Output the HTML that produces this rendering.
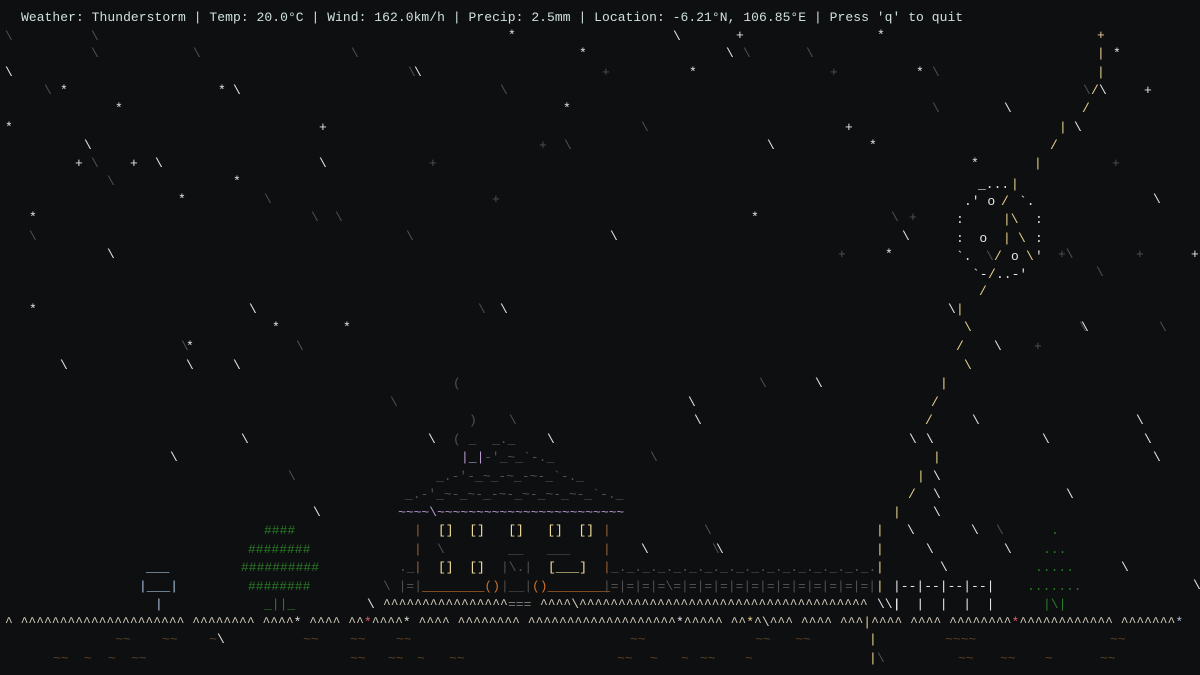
<!DOCTYPE html>
<html><head><meta charset="utf-8"><style>
html,body{margin:0;padding:0;background:#0e0f10;width:1200px;height:675px;overflow:hidden}
body{position:relative;font-family:"Liberation Mono",monospace;font-size:13px;line-height:18px}
i{font-style:normal;position:absolute;white-space:pre}
.w{color:#e4e4e4}.g{color:#505050}.d{color:#3a3a3a}.y{color:#e8d08e}.l{color:#b89ad2}.b{color:#9a6038}
.o{color:#c8702a}.c{color:#f2dc9a}.gn{color:#2c7a2a}.s{color:#a8c4dc}.h{color:#8a8a8a}.r{color:#e06060}
.t{color:#cfe0dc}.gr{color:#d8cfbd}.m{color:#5e4226}.hg{color:#7a7a7a}
</style></head><body>
<i class="t" style="left:21px;top:9px;letter-spacing:0.05px">Weather: Thunderstorm | Temp: 20.0°C | Wind: 162.0km/h | Precip: 2.5mm | Location: -6.21°N, 106.85°E | Press 'q' to quit</i>

<!-- rain & stars -->
<i class="g" style="left:5px;top:28px">\</i><i class="g" style="left:91px;top:28px">\</i><i class="w" style="left:508px;top:27px">*</i><i class="w" style="left:673px;top:28px">\</i><i class="w" style="left:736px;top:27px">+</i><i class="g" style="left:743px;top:45px">\</i><i class="w" style="left:877px;top:27px">*</i>
<i class="g" style="left:91px;top:45px">\</i><i class="g" style="left:193px;top:45px">\</i><i class="g" style="left:351px;top:45px">\</i><i class="w" style="left:579px;top:45px">*</i><i class="w" style="left:726px;top:45px">\</i><i class="g" style="left:806px;top:45px">\</i><i class="w" style="left:1113px;top:45px">*</i>
<i class="w" style="left:5px;top:64px">\</i><i class="g" style="left:408px;top:64px">\</i><i class="w" style="left:414px;top:64px">\</i><i class="g" style="left:602px;top:64px">+</i><i class="w" style="left:689px;top:64px">*</i><i class="g" style="left:830px;top:64px">+</i><i class="w" style="left:916px;top:64px">*</i><i class="g" style="left:932px;top:64px">\</i>
<i class="g" style="left:44px;top:82px">\</i><i class="w" style="left:60px;top:82px">*</i><i class="w" style="left:218px;top:82px">*</i><i class="w" style="left:233px;top:82px">\</i><i class="g" style="left:500px;top:82px">\</i><i class="w" style="left:1144px;top:82px">+</i>
<i class="w" style="left:115px;top:100px">*</i><i class="w" style="left:563px;top:100px">*</i><i class="g" style="left:932px;top:100px">\</i><i class="w" style="left:1004px;top:100px">\</i>
<i class="w" style="left:5px;top:119px">*</i><i class="w" style="left:319px;top:119px">+</i><i class="g" style="left:641px;top:119px">\</i><i class="w" style="left:845px;top:119px">+</i><i class="w" style="left:1074px;top:119px">\</i>
<i class="w" style="left:84px;top:137px">\</i><i class="g" style="left:539px;top:137px">+</i><i class="g" style="left:564px;top:137px">\</i><i class="w" style="left:767px;top:137px">\</i><i class="w" style="left:869px;top:137px">*</i>
<i class="w" style="left:75px;top:155px">+</i><i class="g" style="left:91px;top:155px">\</i><i class="w" style="left:130px;top:155px">+</i><i class="w" style="left:155px;top:155px">\</i><i class="w" style="left:319px;top:155px">\</i><i class="g" style="left:429px;top:155px">+</i><i class="w" style="left:971px;top:155px">*</i><i class="g" style="left:1112px;top:155px">+</i>
<i class="g" style="left:107px;top:173px">\</i><i class="w" style="left:233px;top:173px">*</i>
<i class="w" style="left:178px;top:191px">*</i><i class="g" style="left:264px;top:191px">\</i><i class="g" style="left:492px;top:191px">+</i><i class="w" style="left:1153px;top:191px">\</i>
<i class="w" style="left:29px;top:209px">*</i><i class="g" style="left:311px;top:209px">\</i><i class="g" style="left:335px;top:209px">\</i><i class="w" style="left:751px;top:209px">*</i><i class="g" style="left:891px;top:209px">\</i><i class="g" style="left:909px;top:209px">+</i>
<i class="g" style="left:29px;top:228px">\</i><i class="g" style="left:406px;top:228px">\</i><i class="w" style="left:610px;top:228px">\</i><i class="w" style="left:902px;top:228px">\</i>
<i class="w" style="left:107px;top:246px">\</i><i class="g" style="left:838px;top:246px">+</i><i class="w" style="left:885px;top:246px">*</i><i class="g" style="left:1058px;top:246px">+\</i><i class="g" style="left:1136px;top:246px">+</i><i class="w" style="left:1191px;top:246px">+</i>
<i class="g" style="left:1096px;top:264px">\</i>
<i class="w" style="left:29px;top:301px">*</i><i class="w" style="left:249px;top:301px">\</i><i class="g" style="left:478px;top:301px">\</i><i class="w" style="left:500px;top:301px">\</i>
<i class="w" style="left:272px;top:319px">*</i><i class="w" style="left:343px;top:319px">*</i><i class="g" style="left:1079px;top:319px">\</i><i class="w" style="left:1081px;top:319px">\</i><i class="g" style="left:1159px;top:319px">\</i>
<i class="g" style="left:181px;top:338px">\</i><i class="w" style="left:186px;top:338px">*</i><i class="g" style="left:296px;top:338px">\</i><i class="w" style="left:994px;top:338px">\</i><i class="g" style="left:1034px;top:338px">+</i>
<i class="w" style="left:60px;top:357px">\</i><i class="w" style="left:186px;top:357px">\</i><i class="w" style="left:233px;top:357px">\</i>
<i class="g" style="left:453px;top:375px">(</i><i class="g" style="left:759px;top:375px">\</i><i class="w" style="left:815px;top:375px">\</i>
<i class="g" style="left:390px;top:394px">\</i><i class="w" style="left:688px;top:394px">\</i>
<i class="g" style="left:469px;top:412px">)</i><i class="g" style="left:509px;top:412px">\</i><i class="w" style="left:694px;top:412px">\</i><i class="w" style="left:972px;top:412px">\</i><i class="w" style="left:1136px;top:412px">\</i>
<i class="w" style="left:241px;top:431px">\</i><i class="w" style="left:428px;top:431px">\</i><i class="g" style="left:453px;top:431px">( _  _._</i><i class="w" style="left:547px;top:431px">\</i><i class="w" style="left:909px;top:431px">\</i><i class="w" style="left:1042px;top:431px">\</i><i class="w" style="left:1144px;top:431px">\</i>
<i class="w" style="left:170px;top:449px">\</i><i class="g" style="left:650px;top:449px">\</i><i class="w" style="left:1153px;top:449px">\</i>
<i class="g" style="left:288px;top:468px">\</i>
<i class="w" style="left:1066px;top:486px">\</i>
<i class="w" style="left:313px;top:504px">\</i>
<i class="g" style="left:704px;top:522px">\</i><i class="w" style="left:971px;top:522px">\</i><i class="g" style="left:996px;top:522px">\</i>
<i class="w" style="left:641px;top:541px">\</i><i class="g" style="left:712px;top:541px">\</i><i class="w" style="left:716px;top:541px">\</i><i class="w" style="left:1004px;top:541px">\</i>
<i class="w" style="left:1121px;top:559px">\</i><i class="w" style="left:1193px;top:577px">\</i>

<!-- lightning -->
<i class="y" style="left:1097px;top:27px">+</i><i class="y" style="left:1097px;top:45px">|</i><i class="y" style="left:1097px;top:64px">|</i>
<i class="g" style="left:1083px;top:82px">\</i><i class="y" style="left:1091px;top:82px">/</i><i class="w" style="left:1099px;top:82px">\</i>
<i class="y" style="left:1082px;top:100px">/</i><i class="y" style="left:1059px;top:119px">|</i><i class="y" style="left:1050px;top:137px">/</i><i class="y" style="left:1034px;top:155px">|</i>
<!-- moon -->
<i class="w" style="left:978px;top:176px">_...</i><i class="y" style="left:1011px;top:176px">|</i>
<i class="w" style="left:964px;top:193px">.' o</i><i class="y" style="left:1001px;top:193px">/</i><i class="w" style="left:1019px;top:193px">`.</i>
<i class="w" style="left:956px;top:211px">:</i><i class="y" style="left:1003px;top:211px">|\</i><i class="w" style="left:1035px;top:211px">:</i>
<i class="w" style="left:956px;top:230px">:  o</i><i class="y" style="left:1003px;top:230px">|</i><i class="y" style="left:1018px;top:230px">\</i><i class="w" style="left:1035px;top:230px">:</i>
<i class="w" style="left:956px;top:248px">`.</i><i class="g" style="left:986px;top:248px">\</i><i class="y" style="left:994px;top:248px">/</i><i class="w" style="left:1011px;top:248px">o</i><i class="y" style="left:1026px;top:248px">\</i><i class="w" style="left:1035px;top:248px">'</i>
<i class="w" style="left:972px;top:266px">`-</i><i class="y" style="left:988px;top:266px">/</i><i class="w" style="left:996px;top:266px">..-'</i>
<i class="y" style="left:979px;top:283px">/</i>
<i class="w" style="left:948px;top:301px">\</i><i class="y" style="left:956px;top:301px">|</i>
<i class="y" style="left:964px;top:319px">\</i><i class="y" style="left:956px;top:338px">/</i><i class="y" style="left:964px;top:357px">\</i>
<i class="y" style="left:940px;top:375px">|</i><i class="y" style="left:931px;top:394px">/</i><i class="y" style="left:925px;top:412px">/</i><i class="w" style="left:926px;top:431px">\</i>
<i class="y" style="left:933px;top:449px">|</i><i class="y" style="left:917px;top:468px">|</i><i class="w" style="left:933px;top:468px">\</i>
<i class="y" style="left:908px;top:486px">/</i><i class="w" style="left:933px;top:486px">\</i>
<i class="y" style="left:893px;top:504px">|</i><i class="w" style="left:933px;top:504px">\</i>
<i class="y" style="left:876px;top:522px">|</i><i class="w" style="left:907px;top:522px">\</i>
<i class="y" style="left:876px;top:541px">|</i><i class="w" style="left:926px;top:541px">\</i>
<i class="y" style="left:876px;top:559px">|</i><i class="w" style="left:940px;top:559px">\</i>
<i class="y" style="left:876px;top:578px">|</i><i class="y" style="left:869px;top:631px">|</i><i class="y" style="left:869px;top:650px">|</i><i class="g" style="left:877px;top:650px">\</i>

<!-- house -->
<i class="l" style="left:461px;top:449px">|_|</i><i class="g" style="left:484px;top:449px">-'_~_`-._</i>
<i class="g" style="left:436px;top:468px">_.-'-_~_-~_-~-_`-._</i>
<i class="g" style="left:405px;top:486px">_.-'_~-_~-_-~-_~-_~-_~-_`-._</i>
<i class="l" style="left:398px;top:504px">~~~~\~~~~~~~~~~~~~~~~~~~~~~~~</i>
<i class="b" style="left:414px;top:522px">|</i><i class="c" style="left:438px;top:522px">[]  []   []   []  []</i><i class="b" style="left:603px;top:522px">|</i>
<i class="b" style="left:414px;top:541px">|</i><i class="g" style="left:437px;top:541px">\</i><i class="g" style="left:508px;top:541px">__   ___</i><i class="b" style="left:603px;top:541px">|</i>
<i class="g" style="left:399px;top:559px">._</i><i class="b" style="left:414px;top:559px">|</i><i class="c" style="left:438px;top:559px">[]  []</i><i class="g" style="left:501px;top:559px">|\.|</i><i class="c" style="left:548px;top:559px">[___]</i><i class="b" style="left:603px;top:559px">|</i><i class="g" style="left:611px;top:559px">_._._._._._._._._._._._._._._._._.</i>
<i class="g" style="left:383px;top:578px">\ |=|</i><i class="o" style="left:422px;top:578px">________()</i><i class="g" style="left:501px;top:578px">|__|</i><i class="o" style="left:532px;top:578px">()________</i><i class="g" style="left:603px;top:578px">|=|=|=|=\=|=|=|=|=|=|=|=|=|=|=|=|=|</i>
<i class="w" style="left:367px;top:596px">\ </i><i class="gr" style="left:383px;top:596px">^^^^^^^^^^^^^^^^</i><i class="hg" style="left:508px;top:596px">===</i><i class="gr" style="left:540px;top:596px">^^^^\^^^^^^^^^^^^^^^^^^^^^^^^^^^^^^^^^^^^^</i><i class="w" style="left:877px;top:596px">\\|</i>
<i class="w" style="left:893px;top:578px">|--|--|--|--|</i><i class="w" style="left:893px;top:596px">|  |  |  |  |</i>

<!-- left structure -->
<i class="s" style="left:146px;top:559px">___</i><i class="s" style="left:139px;top:578px">|___|</i><i class="s" style="left:155px;top:596px">|</i>
<!-- trees -->
<i class="gn" style="left:264px;top:522px">####</i><i class="gn" style="left:248px;top:541px">########</i><i class="gn" style="left:241px;top:559px">##########</i><i class="gn" style="left:248px;top:578px">########</i><i class="gn" style="left:264px;top:596px">_||_</i>
<i class="gn" style="left:1051px;top:522px">.</i><i class="gn" style="left:1043px;top:541px">...</i><i class="gn" style="left:1035px;top:559px">.....</i><i class="gn" style="left:1027px;top:578px">.......</i><i class="gn" style="left:1043px;top:596px">|\|</i>

<!-- ground -->
<i class="gr" style="left:5px;top:614px">^ ^^^^^^^^^^^^^^^^^^^^^ ^^^^^^^^ ^^^^<span class="w">*</span> ^^^^ ^^<span class="r">*</span>^^^^<span class="w">*</span> ^^^^ ^^^^^^^^ ^^^^^^^^^^^^^^^^^^^<span class="w">*</span>^^^^^ ^^<span class="y">*</span>^\^^^ ^^^^ ^^^<span class="y">|</span>^^^^ ^^^^ ^^^^^^^^<span class="r">*</span>^^^^^^^^^^^^ ^^^^^^^<span class="s">*</span></i>
<i class="m" style="left:115px;top:631px">~~</i><i class="m" style="left:162px;top:631px">~~</i><i class="m" style="left:209px;top:631px">~</i><i class="w" style="left:217px;top:631px">\</i><i class="m" style="left:303px;top:631px">~~</i><i class="m" style="left:350px;top:631px">~~</i><i class="m" style="left:396px;top:631px">~~</i><i class="m" style="left:630px;top:631px">~~</i><i class="m" style="left:755px;top:631px">~~</i><i class="m" style="left:795px;top:631px">~~</i><i class="m" style="left:945px;top:631px">~~~~</i><i class="m" style="left:1110px;top:631px">~~</i>
<i class="m" style="left:53px;top:650px">~~</i><i class="m" style="left:84px;top:650px">~</i><i class="m" style="left:108px;top:650px">~</i><i class="m" style="left:131px;top:650px">~~</i><i class="m" style="left:350px;top:650px">~~</i><i class="m" style="left:388px;top:650px">~~</i><i class="m" style="left:417px;top:650px">~</i><i class="m" style="left:449px;top:650px">~~</i><i class="m" style="left:617px;top:650px">~~</i><i class="m" style="left:650px;top:650px">~</i><i class="m" style="left:681px;top:650px">~</i><i class="m" style="left:700px;top:650px">~~</i><i class="m" style="left:745px;top:650px">~</i><i class="m" style="left:958px;top:650px">~~</i><i class="m" style="left:1000px;top:650px">~~</i><i class="m" style="left:1045px;top:650px">~</i><i class="m" style="left:1100px;top:650px">~~</i>
</body></html>
